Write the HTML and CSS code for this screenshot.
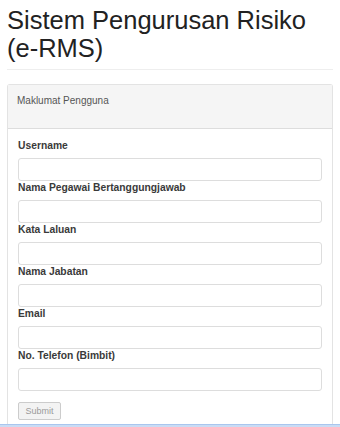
FILE: index.html
```html
<!DOCTYPE html>
<html lang="ms">
<head>
<meta charset="utf-8">
<title>e-RMS</title>
<link rel="stylesheet" href="styles.css">
</head>
<body>
<div class="page">
  <h1 class="title">Sistem Pengurusan Risiko <span class="nowrap">(e-RMS)</span></h1>
  <hr class="divider">
  <div class="panel">
    <div class="panel-heading">Maklumat Pengguna</div>
    <form class="panel-body">
      <div class="group">
        <label class="label">Username</label>
        <input class="input" type="text">
      </div>
      <div class="group">
        <label class="label">Nama Pegawai Bertanggungjawab</label>
        <input class="input" type="text">
      </div>
      <div class="group">
        <label class="label">Kata Laluan</label>
        <input class="input" type="password">
      </div>
      <div class="group">
        <label class="label">Nama Jabatan</label>
        <input class="input" type="text">
      </div>
      <div class="group">
        <label class="label">Email</label>
        <input class="input" type="text">
      </div>
      <div class="group">
        <label class="label">No. Telefon (Bimbit)</label>
        <input class="input" type="text">
      </div>
      <button class="submit" type="button">Submit</button>
    </form>
  </div>
</div>
<div class="bottom-line"></div>
</body>
</html>
```
FILE: styles.css
```css
html, body {
  margin: 0;
  padding: 0;
  background: #ffffff;
  font-family: "Liberation Sans", Arial, sans-serif;
  color: #333333;
}
.page {
  padding: 0 7px;
}
.title {
  margin: 0;
  padding-top: 6px;
  font-size: 25.5px;
  line-height: 28px;
  font-weight: normal;
  color: #222222;
}
.nowrap {
  white-space: nowrap;
}
.divider {
  margin: 7px 0 14px 0;
  border: 0;
  border-top: 1px solid #eeeeee;
  height: 0;
}
.panel {
  border: 1px solid #e3e3e3;
  border-bottom: 0;
  border-radius: 3px 3px 0 0;
  height: 343px;
}
.panel-heading {
  background: #f5f5f5;
  border-bottom: 1px solid #dddddd;
  height: 33px;
  padding: 10px 9px 0 9px;
  font-size: 10px;
  line-height: 12px;
  color: #555555;
}
.panel-body {
  padding: 11px 10px 0 10px;
  display: flex;
  flex-direction: column;
  align-items: flex-start;
}
.group {
  display: flex;
  flex-direction: column;
  align-self: stretch;
  margin-bottom: 1px;
}
.label {
  font-size: 10.3px;
  line-height: 12px;
  font-weight: bold;
  color: #3a3a3a;
  margin-bottom: 6px;
}
.input {
  box-sizing: border-box;
  height: 23px;
  width: 100%;
  margin: 0;
  border: 1px solid #dddddd;
  border-radius: 3px;
  background: #ffffff;
}
.submit {
  margin-top: 10px;
  box-sizing: border-box;
  width: 43px;
  height: 18px;
  padding: 0;
  border: 1px solid #cccccc;
  border-radius: 2px;
  background: #f3f3f3;
  color: #9a9a9a;
  font-family: "Liberation Sans", Arial, sans-serif;
  font-size: 9px;
}
.bottom-line {
  position: fixed;
  left: 0;
  right: 0;
  bottom: 0;
  height: 2px;
  background: #c9dcf5;
  border-top: 1px solid #a9c6ee;
}
```
